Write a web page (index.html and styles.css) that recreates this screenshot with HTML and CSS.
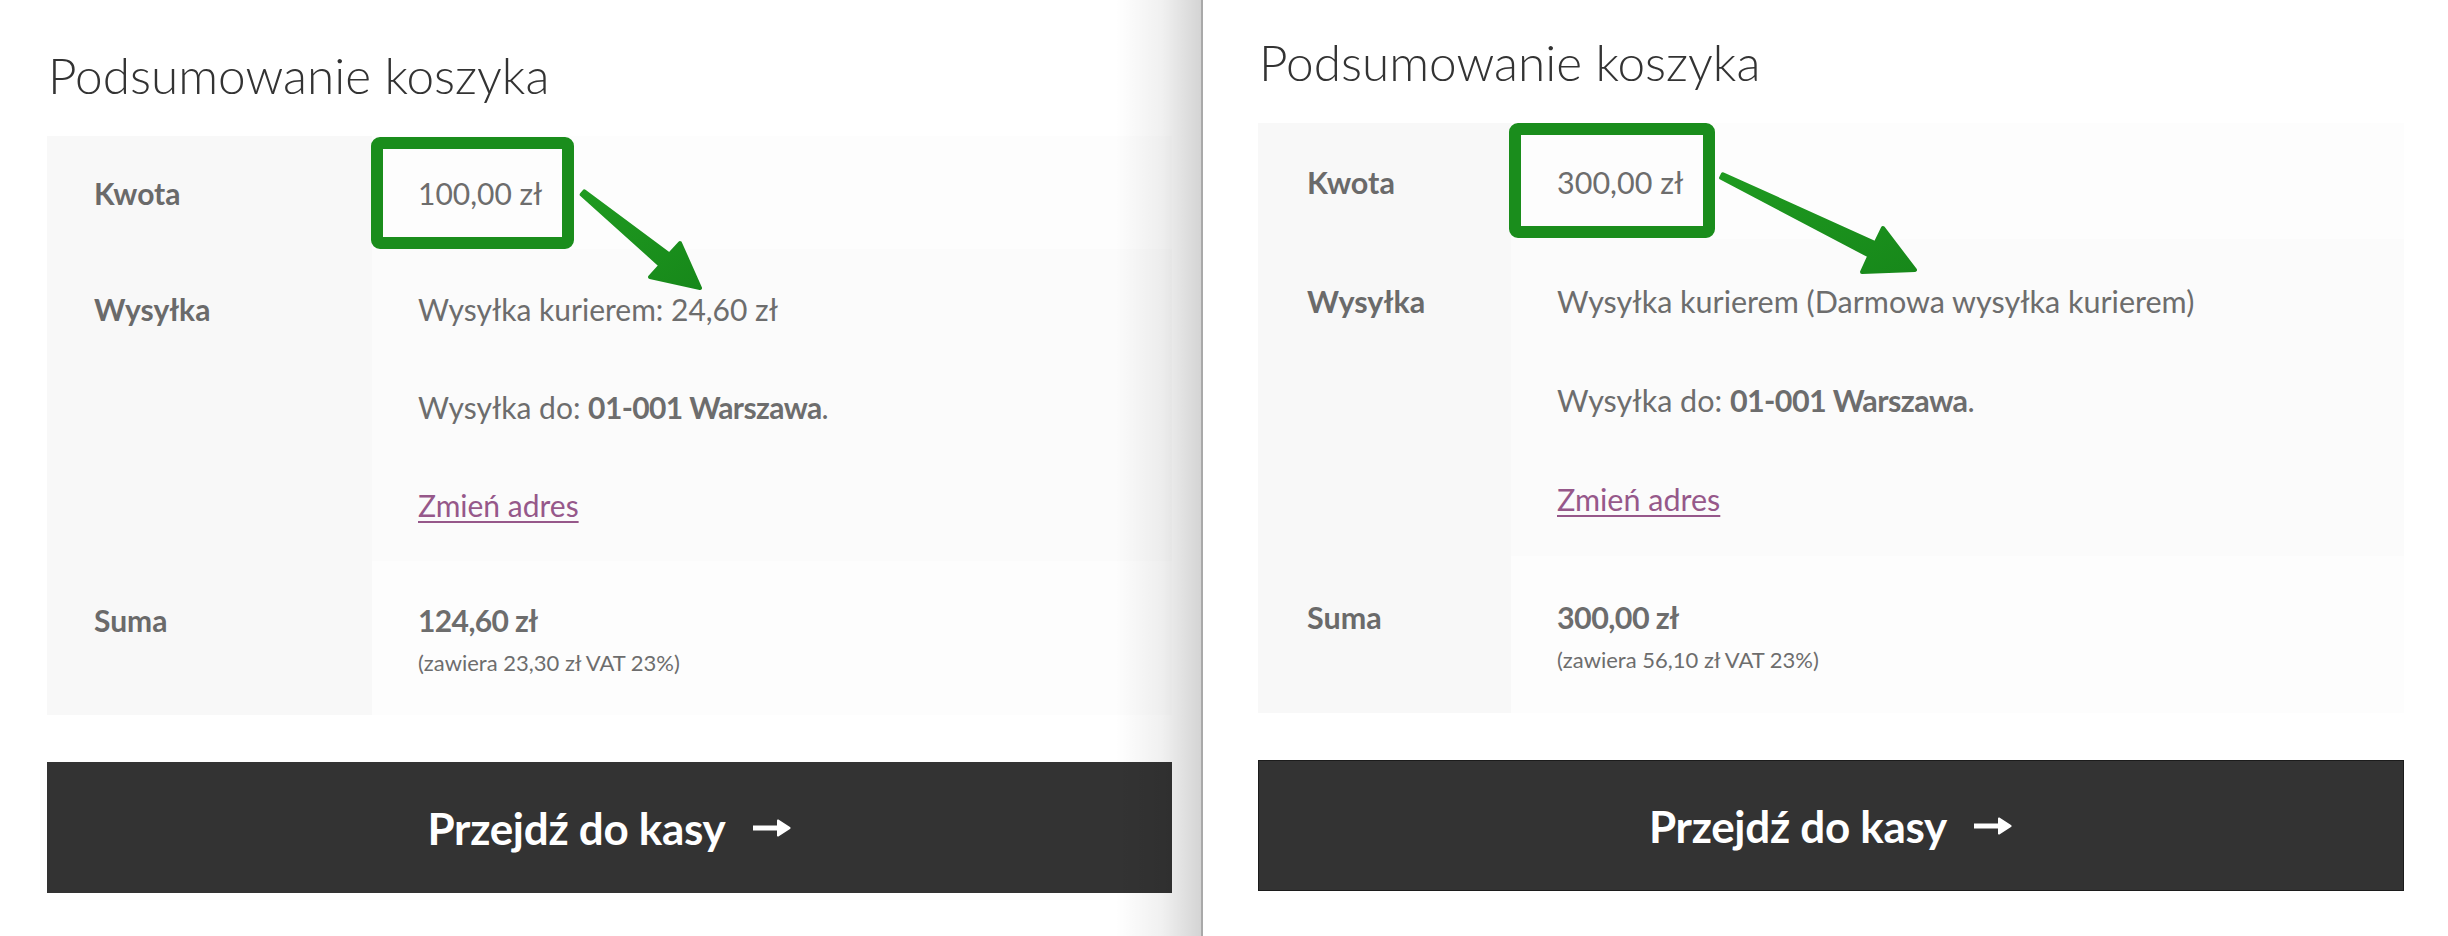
FILE: index.html
```html
<!DOCTYPE html>
<html lang="pl">
<head>
<meta charset="utf-8">
<title>Podsumowanie koszyka</title>
<link rel="stylesheet" href="styles.css">
</head>
<body>
<div class="page">
  <section class="panel panel--left">
    <h2 class="title">Podsumowanie koszyka</h2>
    <div class="totals">
      <div class="row row--odd">
        <div class="th">Kwota</div>
        <div class="td">100,00 zł</div>
      </div>
      <div class="row row--even">
        <div class="th">Wysyłka</div>
        <div class="td">
          <p>Wysyłka kurierem: 24,60 zł</p>
          <p>Wysyłka do: <strong>01-001 Warszawa</strong>.</p>
          <p><a class="link" href="#">Zmień adres</a></p>
        </div>
      </div>
      <div class="row row--odd row--total">
        <div class="th">Suma</div>
        <div class="td">
          <strong>124,60 zł</strong>
          <small class="tax">(zawiera 23,30 zł VAT 23%)</small>
        </div>
      </div>
    </div>
    <a class="checkout" href="#">Przejdź do kasy
      <svg class="checkout__arrow" viewBox="0 0 40 20" aria-hidden="true"><path d="M1 7.5h24V2.5c0-1 1-1.4 1.8-0.8l11.2 7.2c0.8 0.5 0.8 1.6 0 2.1l-11.2 7.2c-0.8 0.6-1.8 0.2-1.8-0.8v-5H1z" fill="#fff"/></svg>
    </a>
  </section>
  <section class="panel panel--right">
    <h2 class="title">Podsumowanie koszyka</h2>
    <div class="totals">
      <div class="row row--odd">
        <div class="th">Kwota</div>
        <div class="td">300,00 zł</div>
      </div>
      <div class="row row--even">
        <div class="th">Wysyłka</div>
        <div class="td">
          <p>Wysyłka kurierem (Darmowa wysyłka kurierem)</p>
          <p>Wysyłka do: <strong>01-001 Warszawa</strong>.</p>
          <p><a class="link" href="#">Zmień adres</a></p>
        </div>
      </div>
      <div class="row row--odd row--total">
        <div class="th">Suma</div>
        <div class="td">
          <strong>300,00 zł</strong>
          <small class="tax">(zawiera 56,10 zł VAT 23%)</small>
        </div>
      </div>
    </div>
    <a class="checkout checkout--bordered" href="#">Przejdź do kasy
      <svg class="checkout__arrow" viewBox="0 0 40 20" aria-hidden="true"><path d="M1 7.5h24V2.5c0-1 1-1.4 1.8-0.8l11.2 7.2c0.8 0.5 0.8 1.6 0 2.1l-11.2 7.2c-0.8 0.6-1.8 0.2-1.8-0.8v-5H1z" fill="#fff"/></svg>
    </a>
  </section>
  <svg class="annotations" viewBox="0 0 2448 936" aria-hidden="true">
    <defs>
      <linearGradient id="arrowGrad" x1="0" y1="0" x2="1" y2="1">
        <stop offset="0" stop-color="#1f9a20"/>
        <stop offset="1" stop-color="#17881a"/>
      </linearGradient>
    </defs>
    <rect x="377" y="143" width="191" height="100" rx="3" fill="none" stroke="#1a8d1c" stroke-width="12"/>
    <rect x="1515" y="129" width="194" height="103" rx="3" fill="none" stroke="#1a8d1c" stroke-width="12"/>
    <polygon points="584.3,191.4 669.4,254.6 680,243 700,288 650,277 660.6,265.4 581.7,194.6" fill="url(#arrowGrad)" stroke="url(#arrowGrad)" stroke-width="4" stroke-linejoin="round"/>
    <polygon points="1722.9,174.2 1875.6,243.2 1883,228 1915,270 1862,272 1869.4,255.8 1721.1,177.8" fill="url(#arrowGrad)" stroke="url(#arrowGrad)" stroke-width="4" stroke-linejoin="round"/>
  </svg>
</div>
</body>
</html>
```

FILE: styles.css
```css
* {
  box-sizing: border-box;
}

html, body {
  margin: 0;
  padding: 0;
  background: #ffffff;
}

body {
  font-family: "Lato", "Liberation Sans", sans-serif;
  color: #6d6d6d;
}

.page {
  position: relative;
  display: flex;
  width: 2448px;
  height: 936px;
  overflow: hidden;
}

.panel {
  display: flex;
  flex-direction: column;
  --fs: 30px;
  --lh: 45px;
  --pt: 35px;
  --pb: 33px;
  --gap: 53px;
}

.panel--left {
  position: relative;
  width: 1203px;
  padding: 46px 29px 0 47px;
  border-right: 2px solid #a9a9a9;
}

.panel--left::after {
  content: "";
  position: absolute;
  top: 0;
  right: 0;
  bottom: 0;
  width: 86px;
  background: linear-gradient(to right, rgba(0, 0, 0, 0), rgba(0, 0, 0, 0.06) 55%, rgba(0, 0, 0, 0.17));
  pointer-events: none;
}

.panel--right {
  flex: 1;
  padding: 33px 44px 0 55px;
  --fs: 30.5px;
  --lh: 46px;
  --pt: 36px;
  --pb: 34px;
  --gap: 53px;
}

.title {
  margin: 0 0 32px 1px;
  font-family: "Lato", sans-serif;
  font-weight: 300;
  font-size: 49.5px;
  line-height: 58px;
  color: #333333;
}

.totals {
  display: flex;
  flex-direction: column;
}

.row {
  display: grid;
  grid-template-columns: 325px 1fr;
}

.panel--right .row {
  grid-template-columns: 253px 1fr;
}

.th,
.td {
  padding: var(--pt) 40px var(--pb) 47px;
  font-size: var(--fs);
  line-height: var(--lh);
}

.row--even .th,
.row--even .td {
  padding-top: calc(var(--pt) + 3px);
}

.row--total .th,
.row--total .td {
  padding-top: calc(var(--pt) + 2px);
  padding-bottom: calc(var(--pb) - 3px);
}

.panel--right .th {
  padding-left: 49px;
}

.th {
  background: #f8f8f8;
  font-weight: 700;
  color: #6a6a6a;
}

.td {
  background: #fdfdfd;
  padding-left: 46px;
}

.row--even .td {
  background: #fbfbfb;
}

.td p {
  margin: 0 0 var(--gap);
}

.td p:last-child {
  margin-bottom: 0;
}

.td strong {
  font-weight: 700;
  letter-spacing: -0.6px;
}

.link {
  color: #96588a;
  text-decoration: underline;
  text-underline-offset: 4px;
  text-decoration-thickness: 2px;
}

.tax {
  display: block;
  margin: 3px 0 5px;
  font-size: 22px;
  line-height: 34px;
}

.checkout {
  display: flex;
  align-items: center;
  justify-content: center;
  gap: 26px;
  height: 131px;
  margin-top: 47px;
  background: #333333;
  color: #ffffff;
  font-weight: 700;
  font-size: 44px;
  text-decoration: none;
  letter-spacing: -0.3px;
}

.checkout--bordered {
  border: 1px solid #1c1c1c;
}

.checkout__arrow {
  width: 40px;
  height: 20px;
}

.annotations {
  position: absolute;
  top: 0;
  left: 0;
  width: 2448px;
  height: 936px;
  pointer-events: none;
}
```
